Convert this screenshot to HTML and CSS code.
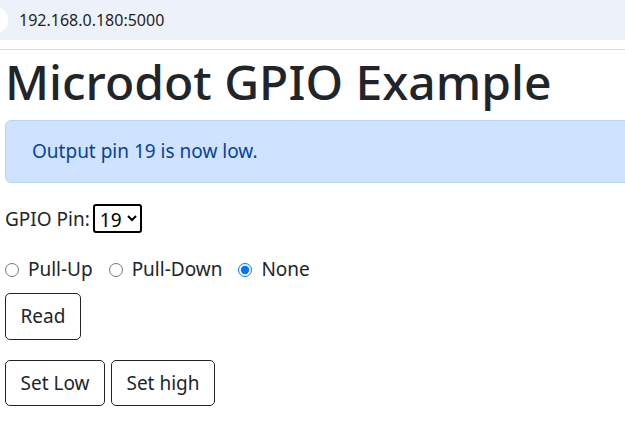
FILE: index.html
```html
<!DOCTYPE html>
<html lang="en">
<head>
    <meta charset="UTF-8">
    <meta name="viewport" content="width=device-width, initial-scale=1.0">
    <title>Microdot GPIO Example</title>
    <link rel="stylesheet" href="styles.css">
</head>
<body>
    <div class="topbar">
        <span class="site-dot"></span>
        <span class="url">192.168.0.180:5000</span>
    </div>

    <div class="page">
        <h1>Microdot GPIO Example</h1>

        <div class="alert">Output pin 19 is now low.</div>

        <div class="row pin-row">
            <label for="pin">GPIO Pin:</label>
            <select id="pin" class="pin-select">
                <option>19</option>
            </select>
        </div>

        <div class="row radios">
            <label><input type="radio" name="pull"> Pull-Up</label>
            <label><input type="radio" name="pull"> Pull-Down</label>
            <label><input type="radio" name="pull" checked> None</label>
        </div>

        <div class="row">
            <button class="btn">Read</button>
        </div>

        <div class="row buttons">
            <button class="btn">Set Low</button>
            <button class="btn">Set high</button>
        </div>
    </div>
</body>
</html>
```

FILE: styles.css
```css
body {
    margin: 0;
    font-family: 'Noto Sans', sans-serif;
    color: #212529;
    background: #fff;
    overflow: hidden;
}

.topbar {
    position: relative;
    height: 40px;
    background-color: #edf2fa;
    display: flex;
    align-items: center;
    padding-left: 19px;
    margin-bottom: 9px;
    overflow: hidden;
}

.site-dot {
    position: absolute;
    left: -18px;
    top: 7px;
    width: 26px;
    height: 26px;
    border-radius: 50%;
    background: #fff;
}

.url {
    font-size: 16px;
    color: #1f1f1f;
}

.page {
    border-top: 1px solid #dcdcdc;
    padding-left: 5px;
    width: 800px;
}

h1 {
    font-size: 48px;
    font-weight: 500;
    line-height: 1.2;
    margin: 3px 0 9px 0;
}

.alert {
    background-color: #cfe2ff;
    border: 1px solid #b6d4fe;
    color: #084298;
    border-radius: 6px;
    padding: 16px 26px 17px;
    font-size: 19px;
    line-height: 1.5;
    margin-bottom: 21px;
}

.row {
    font-size: 19px;
    margin-bottom: 20px;
    display: flex;
    align-items: center;
    gap: 6px;
}

.pin-row {
    gap: 3px;
    margin-bottom: 23px;
}

.pin-select {
    font-family: inherit;
    font-size: 19px;
    line-height: 1.2;
    height: 29px;
    border: 2px solid #000;
    border-radius: 3px;
    padding: 0 2px 0 1px;
    background: #fff;
    color: #000;
}

.radios {
    gap: 16px;
    margin-bottom: 11px;
}

.radios input {
    margin: 0 4px 0 0;
    width: 14px;
    height: 14px;
    vertical-align: -1px;
}

.buttons {
    gap: 6px;
}

.btn {
    font-family: inherit;
    font-size: 19px;
    line-height: 1.5;
    color: #212529;
    background: #fff;
    border: 1px solid #212529;
    border-radius: 5px;
    padding: 8px 14.5px;
}
```
